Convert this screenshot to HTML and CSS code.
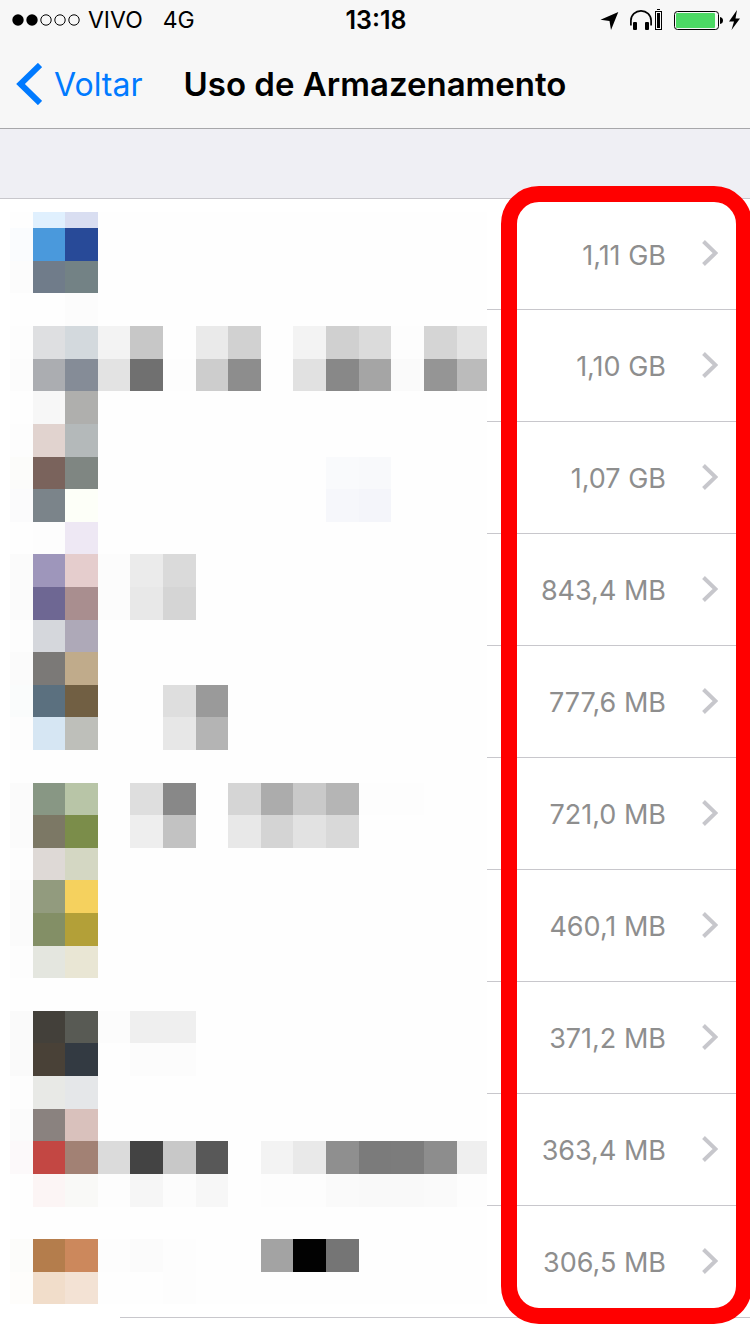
FILE: index.html
```html
<!DOCTYPE html>
<html lang="pt-BR">
<head>
<meta charset="utf-8">
<meta name="viewport" content="width=device-width, initial-scale=1">
<title>Uso de Armazenamento</title>
<link rel="stylesheet" href="styles.css">
</head>
<body>
<header class="top">
  <div class="status">
    <div class="status-left">
      <svg class="signal" width="68" height="12" viewBox="0 0 68 12" aria-hidden="true">
        <circle cx="6" cy="6" r="5.7"/><circle cx="20" cy="6" r="5.7"/>
        <g fill="none" stroke="#000" stroke-width="1"><circle cx="34" cy="6" r="5.2"/><circle cx="48" cy="6" r="5.2"/><circle cx="62" cy="6" r="5.2"/></g>
      </svg>
      <span class="carrier">VIVO</span>
      <span>4G</span>
    </div>
    <time class="clock">13:18</time>
    <div class="status-right">
      <svg width="140" height="24" viewBox="600 8 140 24" aria-hidden="true">
        <path d="M618.3 12 600.5 19.7 609.5 21 611 30Z"/>
        <path d="M630.900 25.500V20.500a10.100 9.700 0 0 1 20.200 0V25.500" fill="none" stroke="#000" stroke-width="1.700"/>
        <rect x="633" y="22" width="4" height="8" rx="1"/><rect x="645" y="22" width="4" height="8" rx="1"/>
        <rect x="655.500" y="11.500" width="6" height="18" fill="none" stroke="#000"/>
        <rect x="657" y="13" width="3" height="15"/><rect x="657" y="9" width="3" height="1"/>
        <rect x="674.500" y="11.500" width="44" height="18" rx="3" fill="none" stroke="#000"/>
        <rect x="676" y="13" width="39" height="15" rx="1" fill="#4cd964"/>
        <path d="M720 17q3 .5 3 3.500t-3 3.500Z"/>
        <path d="M737 10 729 21.500H734L731.500 30 740 18.500H735.500Z"/>
      </svg>
    </div>
  </div>
  <nav class="nav">
    <a class="back" href="#">
      <svg width="26" height="42" viewBox="0 0 26 42" aria-hidden="true"><path d="M24 2 4.500 21 24 40" fill="none" stroke="#007aff" stroke-width="6"/></svg>
      <span>Voltar</span>
    </a>
    <h1 class="title">Uso de Armazenamento</h1>
  </nav>
</header>
<main>
  <div class="spacer"></div>
  <div class="storage">
    <ul class="list">
      <li><a class="row" href="#"><span>1,11 GB</span><svg class="chev" viewBox="0 0 16 26" aria-hidden="true"><path d="M1.500 1.500 13.500 13 1.500 24.500"/></svg></a></li>
      <li><a class="row" href="#"><span>1,10 GB</span><svg class="chev" viewBox="0 0 16 26" aria-hidden="true"><path d="M1.500 1.500 13.500 13 1.500 24.500"/></svg></a></li>
      <li><a class="row" href="#"><span>1,07 GB</span><svg class="chev" viewBox="0 0 16 26" aria-hidden="true"><path d="M1.500 1.500 13.500 13 1.500 24.500"/></svg></a></li>
      <li><a class="row" href="#"><span>843,4 MB</span><svg class="chev" viewBox="0 0 16 26" aria-hidden="true"><path d="M1.500 1.500 13.500 13 1.500 24.500"/></svg></a></li>
      <li><a class="row" href="#"><span>777,6 MB</span><svg class="chev" viewBox="0 0 16 26" aria-hidden="true"><path d="M1.500 1.500 13.500 13 1.500 24.500"/></svg></a></li>
      <li><a class="row" href="#"><span>721,0 MB</span><svg class="chev" viewBox="0 0 16 26" aria-hidden="true"><path d="M1.500 1.500 13.500 13 1.500 24.500"/></svg></a></li>
      <li><a class="row" href="#"><span>460,1 MB</span><svg class="chev" viewBox="0 0 16 26" aria-hidden="true"><path d="M1.500 1.500 13.500 13 1.500 24.500"/></svg></a></li>
      <li><a class="row" href="#"><span>371,2 MB</span><svg class="chev" viewBox="0 0 16 26" aria-hidden="true"><path d="M1.500 1.500 13.500 13 1.500 24.500"/></svg></a></li>
      <li><a class="row" href="#"><span>363,4 MB</span><svg class="chev" viewBox="0 0 16 26" aria-hidden="true"><path d="M1.500 1.500 13.500 13 1.500 24.500"/></svg></a></li>
      <li><a class="row" href="#"><span>306,5 MB</span><svg class="chev" viewBox="0 0 16 26" aria-hidden="true"><path d="M1.500 1.500 13.500 13 1.500 24.500"/></svg></a></li>
    </ul>
    <svg class="mosaic" width="477" height="1092" viewBox="10 212 477 1092" aria-hidden="true"></svg>
    <div class="highlight"></div>
  </div>
</main>
<script src="mosaic.js"></script>
</body>
</html>
```
FILE: styles.css
```css
* { box-sizing: border-box; }
body {
  margin: 0;
  background: #fff;
  color: #000;
  font-family: Inter, "Liberation Sans", sans-serif;
  overflow-x: hidden;
}
a { color: inherit; text-decoration: none; }
svg { display: block; flex: none; }
.top { background: #f7f7f7; border-bottom: 1px solid #a7a7aa; }
.status {
  display: grid;
  grid-template-columns: 1fr auto 1fr;
  align-items: center;
  height: 40px;
  padding: 0 10px 0 12px;
  font-size: 23px;
}
.status-left { display: flex; align-items: center; }
.signal { margin-right: 8px; }
.carrier { margin-right: 20px; }
.clock { font-size: 25px; font-weight: 600; }
.status-right { display: flex; justify-content: flex-end; }
.nav {
  display: grid;
  grid-template-columns: 1fr auto 1fr;
  align-items: center;
  height: 88px;
  padding: 0 16px;
}
.back { display: flex; align-items: center; gap: 12px; color: #007aff; font-size: 32px; }
.title { margin: 0; font-size: 33px; font-weight: 600; white-space: nowrap; }
.spacer { height: 69px; background: #efeff4; }
.storage { position: relative; margin-bottom: 16px; }
.list { margin: 0; padding: 0; list-style: none; border-top: 1px solid #c8c7cc; }
.list li { margin-left: 120px; border-bottom: 1px solid #c8c7cc; }
.row {
  display: flex;
  align-items: center;
  justify-content: flex-end;
  gap: 36px;
  height: 111px;
  padding: 0 32px 2px 0;
  color: #8e8e8e;
  font-size: 27px;
}
.row span { padding-top: 4px; }
.list li:first-child .row { height: 110px; }
.chev { width: 16px; height: 26px; fill: none; stroke: #c7c7cc; stroke-width: 4; }
.mosaic { position: absolute; left: 10px; top: 14px; background: #fefefe; }
.highlight {
  position: absolute;
  top: -12px;
  right: -2px;
  bottom: -6px;
  width: 251px;
  border: 16px solid #f00;
  border-radius: 38px;
  pointer-events: none;
}
```
FILE: mosaic.js
```js
// Edges of the pixelation grid, and the colour of each cell by row and first column.
const cols = [10, 33, 65, 98, 130, 163, 196, 228, 261, 293, 326, 359, 391, 424, 457, 487];
const rows = [212, 228, 261, 293, 326, 359, 391, 424, 457, 489, 522, 554, 587, 620, 652, 685, 717, 750,
  783, 815, 848, 880, 913, 946, 978, 1011, 1043, 1076, 1109, 1141, 1174, 1207, 1239, 1272, 1304];
const cells = [
  "fefefe e0f0fe d9def1",
  "fafcfe 4a99dc 284a98",
  "fcfcfc 707c8a 738285",
  "fefefe fefefe fcfcfc",
  "fdfdfd dedfe1 d3d9dd f3f3f3 c7c7c7 fefefe eaeaea d1d1d1 fefefe f3f3f3 d0d0d0 dbdbdb fdfdfd d5d5d5 e4e4e4",
  "fcfcfc abadb1 858c97 e3e3e3 707070 fdfdfd cdcdcd 8d8d8d fefefe e1e1e1 888888 a5a5a5 fafafa 959595 bbbbbb",
  "fefefe f7f7f7 afafad",
  "fdfdfd e1d3cf b4b9ba",
  "fcfcfa 7a635c 7f8682 - - - - - - - f9fafc f8f9fb",
  "fbfbfc 7b848a fdfff8 - - - - - - - f6f7fb f4f5fa",
  "fefefe fdfdfd eee8f4",
  "fbfbfb 9e96bb e5cdcd fcfcfc ebebeb dadada",
  "fbfbfb 6e6793 a98e8f fcfcfc e8e8e8 d5d5d5",
  "fdfdfd d5d7dc aea9b8",
  "fbfbfb 7b7977 c0ab8b",
  "fafcfc 5b707f 715f43 - - dedede 9a9a9a",
  "fdfdfd d6e6f3 bebfba - - e7e7e7 b4b4b4",
  "",
  "fbfbfb 889784 b8c5a7 - dedede 888888 - d5d5d5 acacac c9c9c9 b5b5b5 fdfdfd fdfdfd",
  "fbfbfb 7c7865 7b8d4a - eeeeee c2c2c2 - e8e8e8 d4d4d4 e2e2e2 d9d9d9",
  "fdfdfd ded9d6 d4d7c3",
  "fbfbfb 929b7e f5d15e",
  "fbfbfb 838f66 b3a038",
  "fdfdfd e4e6df e9e6d4",
  "",
  "fafafa 43403a 585a54 fcfcfc efefef efefef",
  "fafafa 494137 333a42 fefefe fcfcfc fcfcfc",
  "fdfdfd e8e9e6 e5e7e9",
  "fbfbfb 8a827f d9c1bc",
  "fcf9fa c34743 a28174 dbdbdb 434343 c8c8c8 585858 - f3f3f3 e9e9e9 8f8f8f 7b7b7b 7c7c7c 8d8d8d efefef",
  "fefefe fcf5f5 f9f9f7 fdfdfd f6f6f6 fcfcfc f7f7f7 - fdfdfd fdfdfd fafafa f9f9f9 f9f9f9 fafafa fdfdfd",
  "",
  "fcfcfa b47d4c cc885c fdfdfd fbfbfb fdfdfd - - a3a3a3 020202 757575",
  "fefdfb f1ddca f3e2d4 - - fdfdfd"
];
const svg = document.querySelector(".mosaic");
cells.forEach((line, r) => {
  line.split(" ").forEach((colour, c) => {
    if (!colour || colour === "-") return;
    const cell = document.createElementNS("http://www.w3.org/2000/svg", "rect");
    cell.setAttribute("x", cols[c]);
    cell.setAttribute("y", rows[r]);
    cell.setAttribute("width", cols[c + 1] - cols[c]);
    cell.setAttribute("height", rows[r + 1] - rows[r]);
    cell.setAttribute("fill", "#" + colour);
    svg.append(cell);
  });
});
```
